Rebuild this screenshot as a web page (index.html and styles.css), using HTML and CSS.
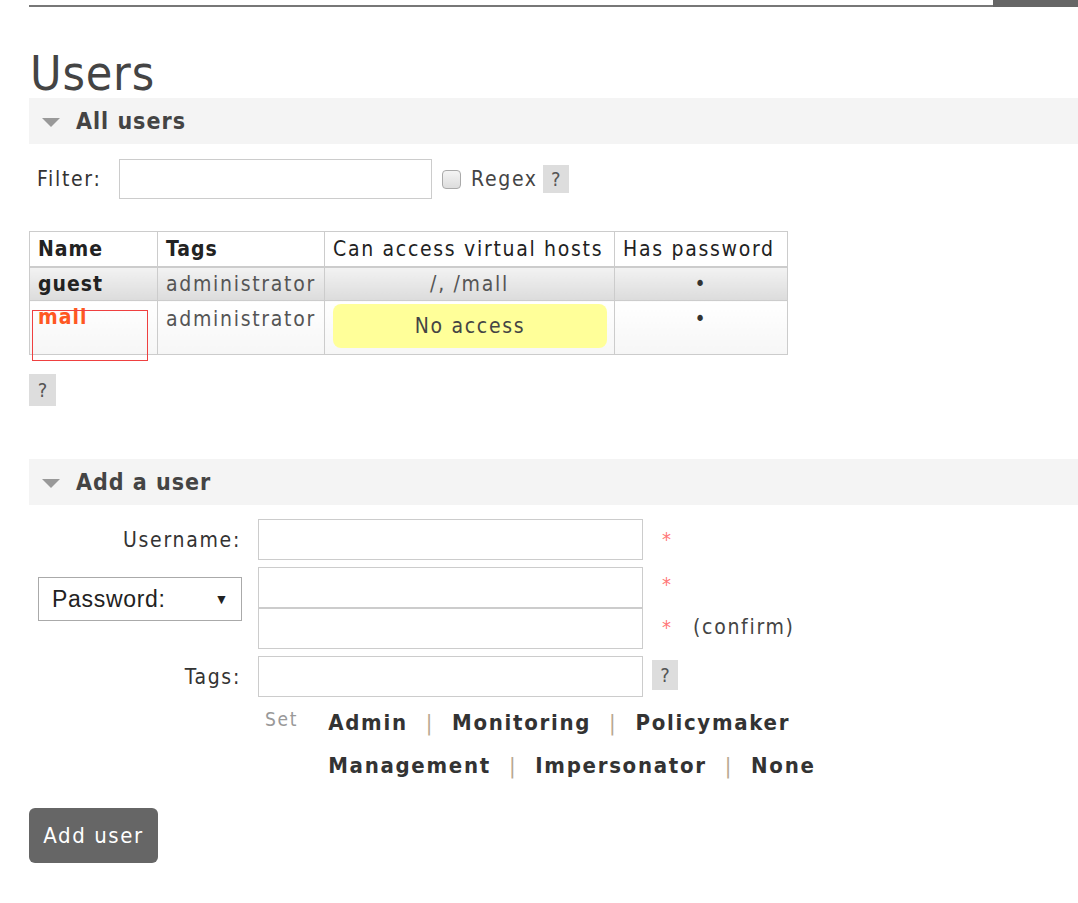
FILE: index.html
```html
<!DOCTYPE html>
<html>
<head>
<meta charset="utf-8">
<link rel="stylesheet" href="styles.css">
</head>
<body>
<div class="topbar"><div class="topline"></div><div class="topblock"></div></div>
<main class="page">
  <h1 class="title">Users</h1>

  <section class="section">
    <h2 class="section-head"><span class="tri"></span>All users</h2>
    <div class="filter">
      <label class="filter-label">Filter:</label>
      <input class="filter-input" type="text">
      <span class="checkbox"></span>
      <span class="regex">Regex</span>
      <span class="help">?</span>
    </div>

    <div class="table-wrap">
      <table class="users">
        <thead>
          <tr>
            <th class="c1 b">Name</th>
            <th class="c2 b">Tags</th>
            <th class="c3">Can access virtual hosts</th>
            <th class="c4">Has password</th>
          </tr>
        </thead>
        <tbody>
          <tr class="row-alt">
            <td class="name">guest</td>
            <td class="tags">administrator</td>
            <td class="vh">/, /mall</td>
            <td class="pw">&#8226;</td>
          </tr>
          <tr class="row-plain">
            <td class="name red">mall</td>
            <td class="tags">administrator</td>
            <td class="vh-cell"><div class="noaccess">No access</div></td>
            <td class="pw">&#8226;</td>
          </tr>
        </tbody>
      </table>
      <div class="annot"></div>
    </div>
    <div class="help help-block">?</div>
  </section>

  <section class="section add">
    <h2 class="section-head"><span class="tri"></span>Add a user</h2>
    <div class="form">
      <div class="lbl">Username:</div>
      <input class="field" type="text">
      <div class="extra"><span class="star">*</span></div>

      <div class="lbl pw-lbl"><div class="select"><span>Password:</span><span class="arrow">&#9660;</span></div></div>
      <div class="pw-fields"><input class="field" type="password"><input class="field" type="password"></div>
      <div class="extra pw-extra"><span class="star">*</span><span class="confirm"><span class="star">*</span><span class="conf-text">(confirm)</span></span></div>

      <div class="lbl">Tags:</div>
      <input class="field" type="text">
      <div class="extra tags-extra"><span class="help">?</span></div>

      <div></div>
      <div class="tagset">
        <span class="set">Set</span>
        <div class="tag-links">
          <div class="tag-line"><b>Admin</b><i>|</i><b>Monitoring</b><i>|</i><b>Policymaker</b></div>
          <div class="tag-line"><b>Management</b><i>|</i><b>Impersonator</b><i>|</i><b>None</b></div>
        </div>
      </div>
      <div></div>
    </div>
    <button class="btn">Add user</button>
  </section>
</main>
</body>
</html>
```
FILE: styles.css
```css
* { box-sizing: border-box; }
body {
  margin: 0;
  font-family: "DejaVu Sans Condensed", "DejaVu Sans", sans-serif;
  font-stretch: condensed;
  letter-spacing: 1.7px;
  color: #484848;
  background: #fff;
}
.topbar { display: flex; height: 7px; align-items: flex-start; }
.topline { margin-left: 29px; flex: 0 0 964px; height: 2px; margin-top: 5px; background: #777; }
.topblock { flex: 1; height: 7px; background: #666; }

.page { padding-left: 29px; }
.title {
  margin: 0;
  padding: 41px 0 0 1px;
  font-weight: normal;
  font-size: 48px;
  line-height: 50px;
  letter-spacing: 0.8px;
  color: #444;
  height: 91px;
}
.section-head {
  display: flex;
  align-items: center;
  margin: 0;
  height: 46px;
  background: #f4f4f4;
  font-size: 23px;
  font-weight: bold;
  letter-spacing: 1px;
  color: #444;
  padding-left: 13px;
}
.tri {
  width: 0; height: 0;
  border-left: 9px solid transparent;
  border-right: 9px solid transparent;
  border-top: 9px solid #999;
  margin-right: 16px;
  margin-top: 2px;
}
.filter {
  display: flex;
  align-items: center;
  height: 70px;
  font-size: 21px;
  color: #333;
}
.filter-label { margin-left: 8px; width: 82px; }
.filter-input {
  width: 313px; height: 40px;
  border: 1px solid #ccc;
  margin: 0;
}
.checkbox {
  width: 19px; height: 19px;
  border: 1px solid #aaa;
  border-radius: 4px;
  background: linear-gradient(#f4f4f4, #ddd);
  margin-left: 10px;
}
.regex { margin-left: 10px; margin-right: 5px; color: #444; }
.help {
  display: inline-flex; align-items: center; justify-content: center;
  width: 26px; height: 28px;
  background: #ddd;
  color: #555;
  font-size: 20px;
  letter-spacing: 0;
}
.table-wrap { position: relative; margin-top: 17px; width: 760px; }
.users {
  border-collapse: collapse;
  font-size: 21px;
  border: 1px solid #ccc;
}
.users th, .users td {
  border: 1px solid #ccc;
  padding: 0 8px;
  white-space: nowrap;
}
.users th { height: 35px; font-weight: normal; color: #222; background: #fff; text-align: left; }
.users th.b { font-weight: bold; letter-spacing: 1px; }
.c1 { width: 128px; }
.c2 { width: 167px; }
.c3 { width: 290px; }
.c4 { width: 173px; }
.users thead tr { border-bottom: 2px solid #ccc; }
.row-alt td { height: 34px; background: linear-gradient(#f2f2f2, #dcdcdc); }
.row-plain td { height: 54px; background: linear-gradient(#fff, #f6f6f6); vertical-align: top; padding-top: 6px; }
.name { font-weight: bold; color: #222; letter-spacing: 1px; }
.red { color: #ff5722; line-height: 20px; }
.tags { color: #555; }
.vh { text-align: center; color: #555; }
.pw { text-align: center; color: #333; }
.row-plain td.vh-cell { padding: 3px 7px 5px 8px; }
.noaccess {
  background: #ffff99;
  border-radius: 8px;
  height: 44px;
  display: flex; align-items: center; justify-content: center;
  color: #444;
}
.annot {
  position: absolute;
  left: 3px; top: 79px;
  width: 116px; height: 51px;
  border: 1px solid #ef4040;
}
.help-block { display: flex; margin-top: 19px; width: 27px; height: 32px; }

.add { margin-top: 53px; }
.form {
  display: grid;
  grid-template-columns: 213px 385px 1fr;
  column-gap: 16px;
  row-gap: 7px;
  margin-top: 14px;
  font-size: 21px;
  color: #333;
}
.lbl { display: flex; align-items: center; justify-content: flex-end; height: 41px; padding-right: 1px; }
.field {
  width: 385px; height: 41px;
  border: 1px solid #ccc;
  margin: 0;
  display: block;
}
.extra { display: flex; align-items: flex-start; padding-top: 8px; }
.star { color: #f77; font-size: 20px; margin-left: 3px; letter-spacing: 0; }
.pw-lbl { height: 81px; align-items: flex-start; padding-top: 10px; padding-right: 0; }
.select {
  display: flex; justify-content: space-between; align-items: center;
  width: 204px; height: 44px;
  border: 1px solid #aaa;
  padding: 0 12px 0 13px;
  font-size: 23px;
  letter-spacing: 0.7px;
  color: #222;
  font-family: "Liberation Sans", Arial, sans-serif;
  font-stretch: normal;
}
.arrow { font-size: 14px; }
.pw-fields { display: flex; flex-direction: column; }
.pw-extra { flex-direction: column; gap: 19px; padding-top: 5px; }
.confirm { display: flex; align-items: center; }
.conf-text { margin-left: 22px; color: #444; }
.tags-extra { padding-top: 4px; margin-left: -7px; }
.tags-extra .help { height: 30px; }
.tagset { display: flex; padding-left: 7px; margin-top: 3px; }
.set { color: #999; font-size: 19px; margin-right: 30px; line-height: 24px; }
.tag-links { display: flex; flex-direction: column; }
.tag-line { display: flex; height: 43px; padding-top: 3px; font-size: 22px; }
.tag-line b { color: #333; }
.tag-line i { font-style: normal; color: #b8a890; margin: 0 18px; font-weight: normal; }
.btn {
  margin-top: 15px;
  width: 129px; height: 55px;
  background: #666;
  color: #fff;
  border: none;
  border-radius: 6px;
  font-family: inherit;
  font-stretch: condensed;
  letter-spacing: 1.6px;
  font-size: 22px;
}
```
